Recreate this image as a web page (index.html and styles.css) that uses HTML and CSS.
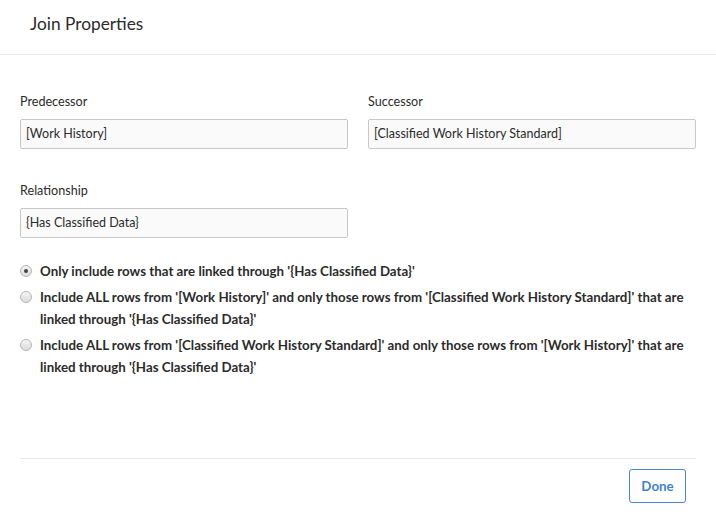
FILE: index.html
```html
<!DOCTYPE html>
<html>
<head>
<meta charset="utf-8">
<link rel="stylesheet" href="styles.css">
</head>
<body>
<div class="dialog">
  <div class="header"><h1 class="title">Join Properties</h1></div>
  <div class="content">
    <div class="grid">
      <div class="field">
        <div class="label">Predecessor</div>
        <div class="input">[Work History]</div>
      </div>
      <div class="field">
        <div class="label">Successor</div>
        <div class="input">[Classified Work History Standard]</div>
      </div>
      <div class="field field-rel">
        <div class="label">Relationship</div>
        <div class="input">{Has Classified Data}</div>
      </div>
    </div>
    <div class="options">
      <div class="option"><span class="radio checked"></span><span class="opt-text">Only include rows that are linked through '{Has Classified Data}'</span></div>
      <div class="option"><span class="radio"></span><span class="opt-text">Include ALL rows from '[Work History]' and only those rows from '[Classified Work History Standard]' that are linked through '{Has Classified Data}'</span></div>
      <div class="option"><span class="radio"></span><span class="opt-text">Include ALL rows from '[Classified Work History Standard]' and only those rows from '[Work History]' that are linked through '{Has Classified Data}'</span></div>
    </div>
  </div>
  <div class="footer"><button class="done">Done</button></div>
</div>
</body>
</html>
```
FILE: styles.css
```css
html, body {
  margin: 0;
  padding: 0;
  background: #fff;
}
body {
  font-family: Lato, "Open Sans", sans-serif;
  color: #2b2b2b;
}
.dialog {
  width: 716px;
  height: 529px;
  display: flex;
  flex-direction: column;
  box-sizing: border-box;
}
.header {
  height: 55px;
  box-sizing: border-box;
  border-bottom: 1px solid #e8e8e8;
  padding: 13px 0 0 30px;
}
.title {
  margin: 0;
  font-size: 17.3px;
  font-weight: normal;
  line-height: 22px;
  color: #2b2b2b;
}
.content {
  padding: 39px 20px 0 20px;
}
.grid {
  display: grid;
  grid-template-columns: 328px 328px;
  column-gap: 20px;
  row-gap: 34px;
}
.label {
  font-size: 12.6px;
  line-height: 16px;
  margin-bottom: 9px;
}
.input {
  height: 30px;
  box-sizing: border-box;
  border: 1px solid #c8c8c8;
  border-radius: 2px;
  background: #fafafa;
  font-size: 12.5px;
  line-height: 28px;
  padding: 0 5px;
  color: #2b2b2b;
}
.options {
  margin-top: 22px;
}
.option {
  display: flex;
  align-items: flex-start;
  margin-bottom: 4px;
}
.radio {
  flex: none;
  width: 12px;
  height: 12px;
  box-sizing: border-box;
  border: 1px solid #b4b4b4;
  border-radius: 50%;
  background: linear-gradient(#f4f4f4, #dcdcdc);
  margin: 5px 8px 0 0;
  display: flex;
  align-items: center;
  justify-content: center;
}
.radio.checked::after {
  content: "";
  width: 4px;
  height: 4px;
  border-radius: 50%;
  background: #444;
}
.opt-text {
  font-size: 13.3px;
  font-weight: bold;
  line-height: 22px;
  color: #2b2b2b;
}
.footer {
  margin: auto 20px 0 20px;
  border-top: 1px solid #e8e8e8;
  padding: 10px 10px 26px 0;
  display: flex;
  justify-content: flex-end;
}
.done {
  width: 57px;
  height: 34px;
  border: 1px solid #4a86d8;
  border-radius: 3px;
  background: #fff;
  color: #3f7fd8;
  font-family: Lato, "Open Sans", sans-serif;
  font-weight: bold;
  font-size: 13.3px;
  padding: 0;
}
```
